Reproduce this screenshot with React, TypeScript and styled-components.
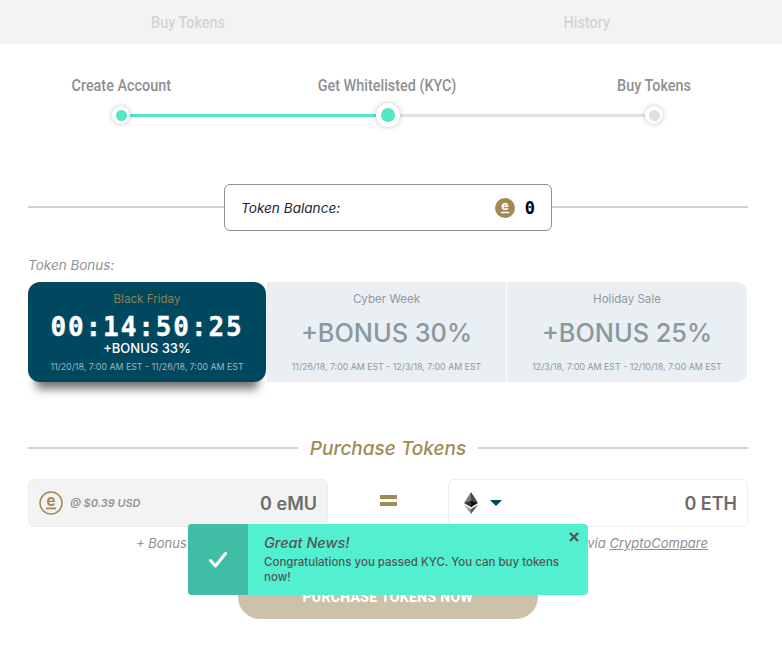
import styled, { createGlobalStyle } from 'styled-components';

const GlobalStyle = createGlobalStyle`
  html, body {
    margin: 0;
    padding: 0;
    background: #fff;
    font-family: 'Inter', 'Liberation Sans', sans-serif;
  }
`;

const mono = `'DejaVu Sans Mono', 'Liberation Mono', monospace`;

const Page = styled.div`
  position: relative;
  width: 782px;
  height: 651px;
  overflow: hidden;
`;

// the original uses a condensed face, none is installed so squeeze Roboto
const Narrow = styled.span`
  display: inline-block;
  font-family: 'Roboto', 'Liberation Sans', sans-serif;
  font-weight: 500;
  white-space: nowrap;
  transform: scaleX(0.9);
`;

const Tabs = styled.nav`
  display: flex;
  justify-content: space-between;
  height: 44px;
  background: #f3f3f3;
`;

const Tab = styled.div<{ $width: number }>`
  display: flex;
  align-items: center;
  justify-content: center;
  width: ${(p) => p.$width}px;
  font-size: 16px;
  color: #d5d3d3;
`;

const StepLabels = styled.div`
  display: flex;
  justify-content: space-between;
  margin-top: 31px;
  padding: 0 28px 0 21px;
`;

const StepLabel = styled.div`
  width: 200px;
  height: 20px;
  line-height: 20px;
  text-align: center;
  font-size: 16px;
  color: #8f8f8f;
`;

const Track = styled.div`
  display: flex;
  align-items: center;
  height: 24px;
  margin-top: 8px;
  padding: 0 119px 0 112px;
`;

const Dot = styled.div<{ $big?: boolean; $color: string }>`
  flex: none;
  position: relative;
  z-index: 1;
  display: flex;
  align-items: center;
  justify-content: center;
  width: ${(p) => (p.$big ? 24 : 18)}px;
  height: ${(p) => (p.$big ? 24 : 18)}px;
  border-radius: 50%;
  background: #fff;
  box-shadow: 0 0 5px rgba(0, 0, 0, 0.25);

  &::after {
    content: '';
    width: ${(p) => (p.$big ? 14 : 11)}px;
    height: ${(p) => (p.$big ? 14 : 11)}px;
    border-radius: 50%;
    background: ${(p) => p.$color};
  }
`;

const TrackLine = styled.div<{ $done?: boolean }>`
  flex: 1;
  height: 3px;
  background: ${(p) => (p.$done ? '#50e6c6' : '#e3e3e3')};
`;

const BalanceRow = styled.div`
  display: flex;
  align-items: center;
  margin-top: 57px;
  padding: 0 34px 0 28px;
`;

const Rule = styled.div`
  flex: 1;
  height: 2px;
  margin-bottom: 1px;
  background: #d2d2d2;
`;

const BalanceBox = styled.div`
  display: flex;
  align-items: center;
  justify-content: space-between;
  box-sizing: border-box;
  width: 328px;
  height: 47px;
  padding: 0 16px 0 16px;
  border: 1px solid #8f8f8f;
  border-radius: 6px;
`;

const BalanceLabel = styled.span`
  font-size: 13.6px;
  font-style: italic;
  font-weight: 400;
  color: #1c2430;
`;

const BalanceValue = styled.span`
  display: flex;
  align-items: center;
  gap: 10px;
  font-family: ${mono};
  font-size: 17px;
  font-weight: 700;
  color: #000;
`;

const BonusLabel = styled.div`
  margin: 25px 0 8px 28px;
  height: 18px;
  line-height: 18px;
  font-size: 13.5px;
  font-style: italic;
  color: #929292;
`;

const BonusGrid = styled.div`
  display: grid;
  grid-template-columns: 238px 239px 240px;
  gap: 1px;
  margin-left: 28px;
  height: 100px;
`;

const BonusCard = styled.div<{ $active?: boolean; $last?: boolean }>`
  display: flex;
  flex-direction: column;
  align-items: center;
  background: ${(p) => (p.$active ? '#004860' : '#e9eff2')};
  border-radius: ${(p) => (p.$active ? '12px' : p.$last ? '0 10px 10px 0' : '0')};
  box-shadow: ${(p) => (p.$active ? '0 15px 10px -8px rgba(0, 0, 0, 0.55)' : 'none')};
  position: relative;
  z-index: ${(p) => (p.$active ? 1 : 0)};
`;

const CardName = styled.div<{ $active?: boolean }>`
  margin-top: 10px;
  height: 14px;
  line-height: 14px;
  font-size: 11.6px;
  color: ${(p) => (p.$active ? '#8f8050' : '#8f9a9e')};
`;

const Countdown = styled.div`
  margin-top: 8px;
  height: 26px;
  line-height: 26px;
  font-family: ${mono};
  font-size: 26px;
  font-weight: 700;
  letter-spacing: 1.9px;
  color: #fff;
  -webkit-text-stroke: 0.4px #fff;
`;

const ActiveBonus = styled.div`
  height: 16px;
  line-height: 16px;
  font-size: 13px;
  font-weight: 500;
  color: #fff;
`;

const BigBonus = styled.div`
  margin-top: 9px;
  height: 36px;
  line-height: 36px;
  font-size: 25.3px;
  font-weight: 500;
  color: #8a989f;
`;

const CardDates = styled.div<{ $active?: boolean }>`
  margin-top: ${(p) => (p.$active ? 5 : 10)}px;
  height: 12px;
  line-height: 12px;
  font-size: 8.8px;
  white-space: nowrap;
  color: ${(p) => (p.$active ? '#9fb6c0' : '#8f9a9e')};
`;

const PurchaseHeading = styled.div`
  display: flex;
  align-items: center;
  gap: 12px;
  margin-top: 52px;
  padding: 0 34px 0 28px;
  height: 28px;
`;

const HeadingText = styled.span`
  font-size: 19px;
  font-style: italic;
  font-weight: 500;
  color: #a08a56;
`;

const Converter = styled.div`
  display: grid;
  grid-template-columns: 300px 120px 300px;
  margin-top: 17px;
  padding-left: 28px;
`;

const AmountBox = styled.div<{ $filled?: boolean }>`
  display: flex;
  align-items: center;
  box-sizing: border-box;
  height: 48px;
  padding: 0 10px;
  background: ${(p) => (p.$filled ? '#f3f3f3' : '#fff')};
  border: 1px solid #eeeeee;
  border-radius: 6px;
`;

const Rate = styled.span`
  margin-left: 7px;
  font-size: 10.9px;
  font-style: italic;
  font-weight: 600;
  color: #949494;
`;

const Amount = styled.span`
  margin-left: auto;
  font-size: 18px;
  font-weight: 600;
  color: #6c6c6c;
`;

const EqualSign = styled.div`
  display: flex;
  flex-direction: column;
  align-items: center;
  justify-content: center;
  gap: 3px;
  height: 43px;
`;

const EqualBar = styled.div`
  width: 17px;
  height: 4px;
  background: #a08a56;
`;

const EthWrap = styled.span`
  display: flex;
  margin-left: 5px;
`;

const Caret = styled.div`
  width: 0;
  height: 0;
  margin-left: 12px;
  border-left: 6px solid transparent;
  border-right: 6px solid transparent;
  border-top: 6px solid #004860;
`;

const Note = styled.div`
  display: flex;
  justify-content: space-between;
  margin-top: 7px;
  padding: 0 74px 0 136px;
  height: 18px;
  line-height: 18px;
  font-size: 13px;
  font-style: italic;
  color: #8f8f8f;

  a {
    color: inherit;
  }
`;

const PurchaseButton = styled.button`
  display: block;
  width: 300px;
  height: 44px;
  margin: 23px 0 0 238px;
  padding: 0;
  border: 0;
  border-radius: 22px;
  background: #cdc1aa;
  font-size: 15px;
  color: #fff;
`;

const ButtonLabel = styled(Narrow)`
  font-weight: 700;
  letter-spacing: 0.3px;
  transform: scaleX(0.94);
`;

const Toast = styled.div`
  position: absolute;
  left: 188px;
  top: 524px;
  display: flex;
  width: 400px;
  height: 71px;
  border-radius: 4px;
  overflow: hidden;
  background: #52f0d0;
`;

const ToastIcon = styled.div`
  flex: none;
  display: flex;
  align-items: center;
  justify-content: center;
  width: 60px;
  background: #40bda5;
`;

const ToastBody = styled.div`
  position: relative;
  flex: 1;
  padding: 9px 20px 0 16px;
  color: #555;
`;

const ToastTitle = styled.div`
  height: 19px;
  line-height: 19px;
  font-size: 14.5px;
  font-style: italic;
  font-weight: 500;
`;

const ToastText = styled.div`
  margin-top: 3px;
  line-height: 15px;
  font-size: 11.5px;
  font-weight: 500;
`;

const ToastClose = styled.svg`
  position: absolute;
  top: 8px;
  right: 9px;
`;

const CoinIcon = ({ size, outline }: { size: number; outline?: boolean }) => (
  <svg width={size} height={size} viewBox="0 0 24 24">
    <circle
      cx="12"
      cy="12"
      r={outline ? 11 : 12}
      fill={outline ? 'none' : '#a08a56'}
      stroke={outline ? '#a08a56' : 'none'}
      strokeWidth="1.5"
    />
    <text
      x="12"
      y="14.5"
      textAnchor="middle"
      fontFamily="Inter, sans-serif"
      fontSize="15"
      fontWeight="700"
      fill={outline ? '#a08a56' : '#fff'}
    >
      e
    </text>
    <rect x="7" y="16.5" width="10" height="1.8" fill={outline ? '#a08a56' : '#fff'} />
  </svg>
);

const EthIcon = () => (
  <svg width="14" height="22" viewBox="0 0 16 24" preserveAspectRatio="none">
    <polygon points="8,0 0,12 8,9" fill="#7a7a7a" />
    <polygon points="8,0 16,12 8,9" fill="#444" />
    <polygon points="0,12 8,9 8,16.5" fill="#333" />
    <polygon points="16,12 8,9 8,16.5" fill="#111" />
    <polygon points="0,13.8 8,24 8,18.5" fill="#999" />
    <polygon points="16,13.8 8,24 8,18.5" fill="#555" />
  </svg>
);

const bonuses = [
  { name: 'Cyber Week', bonus: '+BONUS 30%', dates: '11/26/18, 7:00 AM EST - 12/3/18, 7:00 AM EST' },
  { name: 'Holiday Sale', bonus: '+BONUS 25%', dates: '12/3/18, 7:00 AM EST - 12/10/18, 7:00 AM EST' },
];

export default function App() {
  return (
    <Page>
      <GlobalStyle />
      <Tabs>
        <Tab $width={376}><Narrow>Buy Tokens</Narrow></Tab>
        <Tab $width={390}><Narrow>History</Narrow></Tab>
      </Tabs>

      <StepLabels>
        <StepLabel><Narrow>Create Account</Narrow></StepLabel>
        <StepLabel><Narrow>Get Whitelisted (KYC)</Narrow></StepLabel>
        <StepLabel><Narrow>Buy Tokens</Narrow></StepLabel>
      </StepLabels>
      <Track>
        <Dot $color="#50e6c6" />
        <TrackLine $done />
        <Dot $big $color="#50e6c6" />
        <TrackLine />
        <Dot $color="#d9e1e3" />
      </Track>

      <BalanceRow>
        <Rule />
        <BalanceBox>
          <BalanceLabel>Token Balance:</BalanceLabel>
          <BalanceValue>
            <CoinIcon size={20} />0
          </BalanceValue>
        </BalanceBox>
        <Rule />
      </BalanceRow>

      <BonusLabel>Token Bonus:</BonusLabel>
      <BonusGrid>
        <BonusCard $active>
          <CardName $active>Black Friday</CardName>
          <Countdown>00:14:50:25</Countdown>
          <ActiveBonus>+BONUS 33%</ActiveBonus>
          <CardDates $active>11/20/18, 7:00 AM EST - 11/26/18, 7:00 AM EST</CardDates>
        </BonusCard>
        {bonuses.map((b, i) => (
          <BonusCard key={b.name} $last={i === bonuses.length - 1}>
            <CardName>{b.name}</CardName>
            <BigBonus>{b.bonus}</BigBonus>
            <CardDates>{b.dates}</CardDates>
          </BonusCard>
        ))}
      </BonusGrid>

      <PurchaseHeading>
        <Rule />
        <HeadingText>Purchase Tokens</HeadingText>
        <Rule />
      </PurchaseHeading>

      <Converter>
        <AmountBox $filled>
          <CoinIcon size={24} outline />
          <Rate>@ $0.39 USD</Rate>
          <Amount>0 eMU</Amount>
        </AmountBox>
        <EqualSign>
          <EqualBar />
          <EqualBar />
        </EqualSign>
        <AmountBox>
          <EthWrap>
            <EthIcon />
          </EthWrap>
          <Caret />
          <Amount>0 ETH</Amount>
        </AmountBox>
      </Converter>

      <Note>
        <span>+ Bonus</span>
        <span>
          via <a href="#cc">CryptoCompare</a>
        </span>
      </Note>

      <PurchaseButton>
        <ButtonLabel>PURCHASE TOKENS NOW</ButtonLabel>
      </PurchaseButton>

      <Toast>
        <ToastIcon>
          <svg width="20" height="18" viewBox="0 0 20 18">
            <path d="M2.5 9.5 L7.5 15 L17.5 2.5" fill="none" stroke="#fff" strokeWidth="3" strokeLinecap="round" strokeLinejoin="round" />
          </svg>
        </ToastIcon>
        <ToastBody>
          <ToastTitle>Great News!</ToastTitle>
          <ToastText>Congratulations you passed KYC. You can buy tokens now!</ToastText>
          <ToastClose width="10" height="10" viewBox="0 0 10 10">
            <path d="M1 1 L9 9 M9 1 L1 9" stroke="#555" strokeWidth="2.4" />
          </ToastClose>
        </ToastBody>
      </Toast>
    </Page>
  );
}
